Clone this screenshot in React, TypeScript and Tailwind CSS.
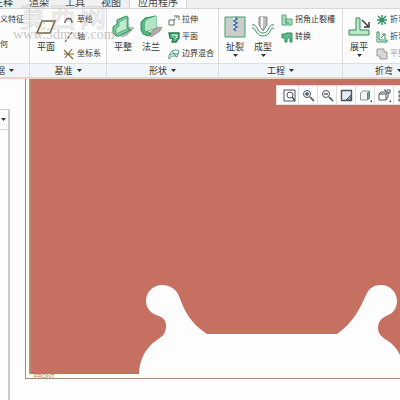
import type { ReactNode } from "react";

function Caret() {
  return (
    <svg className="h-[3px] w-[5px] shrink-0" viewBox="0 0 5 3">
      <path d="M0 0h5L2.5 3Z" fill="#333" />
    </svg>
  );
}

function Tab({ children, active }: { children: ReactNode; active?: boolean }) {
  return (
    <button
      aria-selected={Boolean(active)}
      className={`flex h-full shrink-0 items-end px-[8px] text-[10px] leading-[11px] text-[#444] ${
        active ? "border-x border-[#d4d4d4] bg-[#fcfcfc]" : ""
      }`}
      role="tab"
      type="button"
    >
      {children}
    </button>
  );
}

function BigTool({ label, icon, caret }: { label: string; icon: ReactNode; caret?: boolean }) {
  return (
    <button className="flex w-[28px] shrink-0 flex-col items-center text-[9px] leading-[12px]" type="button">
      <span className="flex h-[30px] items-center pt-[2px]">{icon}</span>
      <span className="mb-[1px]">{label}</span>
      {caret && <Caret />}
    </button>
  );
}

function SmallTool({ label, icon, muted }: { label: string; icon?: ReactNode; muted?: boolean }) {
  return (
    <button
      className={`flex h-[17px] items-center gap-[2px] whitespace-nowrap text-[8px] leading-[12px] ${muted ? "text-[#999]" : ""}`}
      type="button"
    >
      {icon}
      {label}
    </button>
  );
}

function Group({
  title,
  className,
  alignStart,
  children,
}: {
  title: string;
  className: string;
  alignStart?: boolean;
  children: ReactNode;
}) {
  return (
    <section className={`flex shrink-0 flex-col border-r border-[#dcdcdc] ${className}`}>
      <div className="flex h-[54px] items-start pl-[2px] pt-[2px]">{children}</div>
      <button
        className={`flex h-[14px] w-full items-center gap-[4px] whitespace-nowrap border-t border-[#dde1e6] bg-[#f1f4f8] text-[9px] leading-[12px] ${
          alignStart ? "justify-start" : "justify-center"
        }`}
        type="button"
      >
        {title}
        <Caret />
      </button>
    </section>
  );
}

function SmallIcon({ children }: { children: ReactNode }) {
  return (
    <svg className="h-[12px] w-[12px] shrink-0" viewBox="0 0 12 12" fill="none" stroke="#2f8f62">
      {children}
    </svg>
  );
}

function ViewButton({ label, children }: { label: string; children: ReactNode }) {
  return (
    <button
      aria-label={label}
      className="flex h-[18px] w-[19px] shrink-0 items-center justify-center border-r border-[#dedede]"
      type="button"
    >
      <svg className="h-[13px] w-[13px]" viewBox="0 0 13 13" fill="none" stroke="#4b5560">
        {children}
      </svg>
    </button>
  );
}

export default function App() {
  return (
    <div className="relative flex h-screen flex-col overflow-hidden bg-[#fdfdfd] font-['Liberation_Sans','Noto_Sans_CJK_SC',sans-serif] text-[#333]">
      <nav className="flex h-[9px] shrink-0 overflow-hidden border-b border-[#d8d8d8] bg-[#f0f0f0]" role="tablist">
        <div className="-ml-[15px] flex h-full">
          <Tab>注释</Tab>
          <Tab>渲染</Tab>
          <Tab>工具</Tab>
          <Tab>视图</Tab>
          <Tab active>应用程序</Tab>
        </div>
      </nav>

      <div className="flex shrink-0 overflow-hidden border-b-2 border-[#efcfc8] bg-[#fcfcfc]">
        <Group alignStart className="-ml-[4px] w-[34px]" title="据">
          <div className="ml-[2px]">
            <SmallTool label="义特征" />
            <div className="h-[8px]" />
            <SmallTool label="何" />
          </div>
        </Group>

        <Group className="w-[77px]" title="基准">
          <BigTool
            icon={
              <svg className="h-[18px] w-[22px]" viewBox="0 0 22 18">
                <path d="M7 3h13l-5 12H2Z" fill="#fbfaf4" stroke="#74633c" strokeWidth="1.6" />
              </svg>
            }
            label="平面"
          />
          <div className="ml-[3px]">
            <SmallTool
              icon={
                <SmallIcon>
                  <path d="M2 9c0-6 7-6 7 0" stroke="#555" strokeWidth="1.4" />
                </SmallIcon>
              }
              label="草绘"
            />
            <SmallTool
              icon={
                <SmallIcon>
                  <path d="M2 11 9 1" stroke="#75633e" strokeDasharray="3 1.5" strokeWidth="1.2" />
                </SmallIcon>
              }
              label="轴"
            />
            <SmallTool
              icon={
                <SmallIcon>
                  <path d="m1 2 9 9M9 1 2 10M6 6h5M1 6h4" stroke="#806b3d" strokeWidth="1.2" />
                </SmallIcon>
              }
              label="坐标系"
            />
          </div>
        </Group>

        <Group className="w-[112px]" title="形状">
          <BigTool
            icon={
              <svg className="h-[24px] w-[24px]" viewBox="0 0 24 24">
                <path d="m9 20 9-8 5 1-7 7-5 2Z" fill="#b9bdbb" stroke="#9aa09d" strokeWidth=".6" />
                <path d="M2 12 6 9V5l9-4 2 1v12l3 1-12 6H5l-3-3Z" fill="#7cca9a" stroke="#2f8f62" />
                <path d="m5 13 3-2V7l8-4v11L5 19Z" fill="#c1ebcd" stroke="#44a574" strokeWidth=".8" />
              </svg>
            }
            label="平整"
          />
          <BigTool
            icon={
              <svg className="h-[24px] w-[24px]" viewBox="0 0 24 24">
                <path d="m9 19 8-6 6-1-2 4-9 6Z" fill="#b4aaa5" stroke="#928a87" strokeWidth=".8" />
                <path d="m2 7 4-4 11-2v12l-9 3 4 3-3 2-5-2-2-4Z" fill="#58b584" stroke="#2f8f62" />
                <path d="m6 7 3-3 8-3v12l-9 3-2-1Z" fill="#b3e5c3" />
              </svg>
            }
            label="法兰"
          />
          <div className="ml-[3px]">
            <SmallTool
              icon={
                <SmallIcon>
                  <path d="M1 6h5v5H1ZM6 2h5v4" stroke="#607068" />
                  <path d="m6 6 4-4" strokeDasharray="2 1" />
                </SmallIcon>
              }
              label="拉伸"
            />
            <SmallTool
              icon={
                <SmallIcon>
                  <path d="M1 2h10v5l-3 4H4l1-3-3-1Z" fill="#60b888" stroke="#247b50" strokeWidth="1.3" />
                  <path d="M4 4h5v2L7 8" stroke="#e7f7ec" />
                </SmallIcon>
              }
              label="平面"
            />
            <SmallTool
              icon={
                <SmallIcon>
                  <path d="M1 8c2-6 6-7 10-5L9 9C6 7 3 8 1 11ZM4 3l4 5M2 7c3-2 5-1 8-1" strokeWidth=".9" />
                </SmallIcon>
              }
              label="边界混合"
            />
          </div>
        </Group>

        <Group className="w-[124px]" title="工程">
          <BigTool
            caret
            icon={
              <svg className="h-[22px] w-[22px]" viewBox="0 0 22 22">
                <path d="M1 1h20v20H1Z" fill="#c9cecb" stroke="#469d6d" />
                <path d="M11 1v13" stroke="#f4f7f5" strokeWidth="3" />
                <path d="m11 1 2 2-3 2 3 2-3 2 3 2-3 2 2 2" fill="none" stroke="#3268a1" strokeWidth="1.5" />
              </svg>
            }
            label="扯裂"
          />
          <BigTool
            caret
            icon={
              <svg className="h-[22px] w-[24px]" viewBox="0 0 24 22">
                <path d="M8 1h8v8l-4 6-4-6Z" fill="#b9bdbd" stroke="#858989" />
                <path d="M11 1v11" stroke="#fff" strokeWidth="2" />
                <path
                  d="M1 9c3-1 5 2 6 5 2 4 8 4 10 0 1-3 3-6 6-5M1 12c3 0 3 2 5 5 3 4 9 4 12 0 2-3 2-5 5-5"
                  fill="none"
                  stroke="#398e5f"
                />
              </svg>
            }
            label="成型"
          />
          <div className="ml-[4px]">
            <SmallTool
              icon={
                <SmallIcon>
                  <path d="M1 1h4v4h6v6H1Z" fill="#a8dcb9" stroke="#5aa67d" />
                  <path d="M5 5v4h3" />
                </SmallIcon>
              }
              label="拐角止裂槽"
            />
            <SmallTool
              icon={
                <SmallIcon>
                  <path d="M1 3h4V2h6v9H9V6L6 8v3H4V7H1Z" fill="#63b98b" />
                </SmallIcon>
              }
              label="转换"
            />
          </div>
        </Group>

        <Group className="w-[92px]" title="折弯">
          <BigTool
            caret
            icon={
              <svg className="h-[22px] w-[24px]" viewBox="0 0 24 22">
                <path d="M9 2h4v12h9v5H2v-5h7Z" fill="#bce7c7" stroke="#39895b" />
                <path d="m15 4 6 6m1-4v5h-5" fill="none" stroke="#333" strokeWidth="1.4" />
              </svg>
            }
            label="展平"
          />
          <div className="ml-[3px]">
            <SmallTool
              icon={
                <SmallIcon>
                  <path d="M6 1v10M1 6h10M2 2l8 8M10 2l-8 8" strokeWidth="1.4" />
                </SmallIcon>
              }
              label="折弯"
            />
            <SmallTool
              icon={
                <SmallIcon>
                  <path d="M1 1v10h10V9H3V1ZM5 7l4-4m-3 0h3v5" />
                </SmallIcon>
              }
              label="折弯"
            />
            <SmallTool
              icon={
                <SmallIcon>
                  <path d="M1 1h7v3h3v7H4V8H1Z" fill="#d8d8d8" stroke="#999" />
                </SmallIcon>
              }
              label="平整"
              muted
            />
          </div>
        </Group>
      </div>

      <main className="flex min-h-0 flex-1">
        <aside className="w-[10px] shrink-0 pt-[30px]">
          <div className="h-full border-r-2 border-t border-[#ccc]">
            <button
              aria-label="展开"
              className="flex h-[20px] w-full items-center border-b border-[#d5d5d5] pl-[1px]"
              type="button"
            >
              <Caret />
            </button>
          </div>
        </aside>

        <div className="ml-[15px] flex min-w-0 flex-1 flex-col pb-[21px]">
          <div className="relative flex min-h-0 flex-1 flex-col border-b border-l border-[#a58c78] bg-[#fffdf6]">
            <div className="ml-[3px] min-h-0 flex-1 border-l-2 border-[#b98a72]">
              <svg
                aria-label="FRONT"
                className="h-full w-full bg-[#c57060]"
                preserveAspectRatio="xMidYMid slice"
                role="img"
                viewBox="31 79 369 295"
              >
                <path
                  d="M139 375C139 360 146 347 157 340C163 336 166 333 166 326C166 321 164 318 159 316C151 314 146 308 146 301C146 292 153 285 162 285C170 285 176 289 179 296C184 310 190 323 207 334H337C354 322 360 308 366 295C369 288 374 285 381 285C390 285 397 292 397 301C397 308 393 314 386 316C380 319 378 323 378 328C378 334 382 337 388 341C394 345 399 351 401 358V375Z"
                  fill="#fdfdfd"
                />
              </svg>
            </div>
            <div className="flex h-[4px] items-center pl-[8px] text-[6px] leading-[4px] text-[#a87550]">FRONT</div>

            <div
              className="absolute left-[250px] top-[6px] flex w-[140px] border border-[#e8e0de] bg-[#fdfdfd] pl-[3px]"
              role="toolbar"
            >
              <ViewButton label="重新调整">
                <path d="M1 1h11v11H1Z" />
                <circle cx="7" cy="6" r="3" />
                <path d="m9 8 3 4" strokeWidth="1.5" />
              </ViewButton>
              <ViewButton label="放大">
                <circle cx="5" cy="5" r="3.5" />
                <path d="M3 5h4M5 3v4" strokeWidth="1.4" />
                <path d="m8 8 4 4" strokeWidth="1.7" />
              </ViewButton>
              <ViewButton label="缩小">
                <circle cx="5" cy="5" r="3.5" />
                <path d="M3 5h4" strokeWidth="1.4" />
                <path d="m8 8 4 4" strokeWidth="1.7" />
              </ViewButton>
              <ViewButton label="重画">
                <path d="M1.5 1.5h10v10h-10Z" fill="#e3edf0" strokeWidth="1.4" />
                <path d="m6 11 5-5v5Z" fill="#81aeb9" />
              </ViewButton>
              <ViewButton label="显示样式">
                <path d="m1.5 4 2-2h7v7l-2 2h-7Z" fill="#eef5f3" stroke="#8b9895" />
                <path d="M8.5 4v7l2-2V2Z" fill="#74a49b" stroke="#5c8580" />
                <path d="M13 11v2h-2Z" fill="#333" stroke="none" />
              </ViewButton>
              <ViewButton label="已命名视图">
                <path d="M1 5h7v6H1ZM1 5l2-2h7L8 5m2-2v5l-2 3" />
                <path d="M6 1h2v2M9 1h3v3h-2" />
                <path d="M13 11v2h-2Z" fill="#333" stroke="none" />
              </ViewButton>
              <ViewButton label="视图管理器">
                <path d="M2 2h2v2H2ZM2 6h2v2H2ZM2 10h2v2H2ZM6 3h5M6 7h5M6 11h5" />
              </ViewButton>
            </div>
          </div>
        </div>
      </main>

      <div className="pointer-events-none absolute left-[20px] top-[5px] flex gap-[4px] text-[26px] leading-[26px] text-transparent [-webkit-text-stroke:1px_#b0b0b066]">
        <span>莫</span>
        <span>西</span>
        <span>网</span>
      </div>
      <div className="pointer-events-none absolute left-[13px] top-[27px] font-['Liberation_Serif',serif] text-[14px] leading-[15px] text-[#b0b0b0]/70">
        www.3dmxw.com
      </div>
    </div>
  );
}
